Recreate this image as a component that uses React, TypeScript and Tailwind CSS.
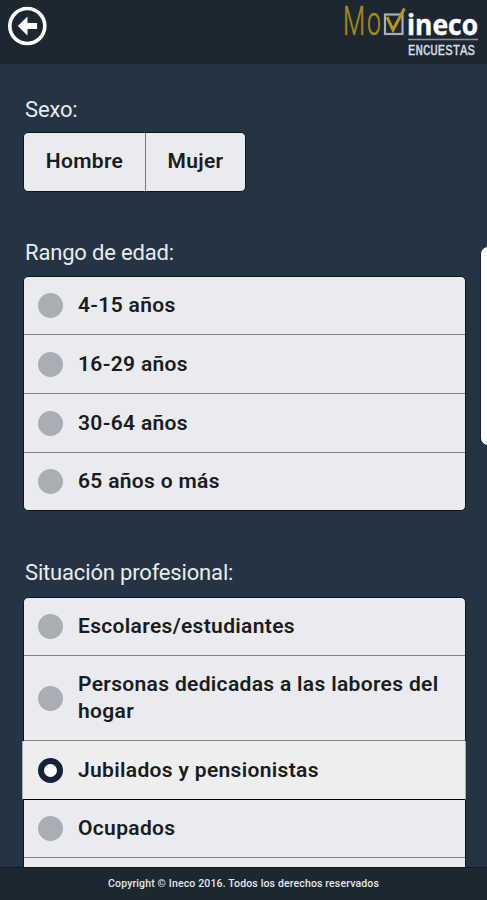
import React, { useState } from "react";
import clsx from "clsx";

type Option = { label: string; size: string };

const GENDERS: Option[] = [
  { label: "Hombre", size: "w-[122px]" },
  { label: "Mujer", size: "w-[99px]" },
];

const AGES: Option[] = [
  { label: "4-15 años", size: "h-[58px]" },
  { label: "16-29 años", size: "h-[59px]" },
  { label: "30-64 años", size: "h-[59px]" },
  { label: "65 años o más", size: "h-[57px]" },
];

const JOBS: Option[] = [
  { label: "Escolares/estudiantes", size: "h-[58px]" },
  { label: "Personas dedicadas a las labores del hogar", size: "h-[85px]" },
  { label: "Jubilados y pensionistas", size: "h-[59px]" },
  { label: "Ocupados", size: "h-[58px]" },
];

function Logo() {
  return (
    <svg width="144" height="60" viewBox="0 0 144 60" fill="none">
      <text
        transform="translate(0 35) scale(0.64 1)"
        fontFamily="Roboto, sans-serif"
        fontWeight="300"
        fontSize="40"
        stroke="#a68a1c"
        strokeWidth="0.5"
        fill="#a68a1c"
      >
        M
      </text>
      <text
        transform="translate(24 35) scale(0.62 1)"
        fontFamily="Roboto, sans-serif"
        fontWeight="300"
        fontSize="40"
        stroke="#a68a1c"
        strokeWidth="0.5"
        fill="#a68a1c"
      >
        o
      </text>
      <rect x="42" y="14.5" width="17.5" height="19.5" stroke="#a9afbb" strokeWidth="2.2" />
      <path d="M44 17 50 30 61.5 8.5" stroke="#b5961a" strokeWidth="3" />
      <text
        x="64"
        y="34.5"
        fontFamily="'Open Sans', sans-serif"
        fontWeight="700"
        fontSize="28.5"
        textLength="71"
        lengthAdjust="spacingAndGlyphs"
        stroke="#fff"
        strokeWidth="0.4"
        fill="#fff"
      >
        ineco
      </text>
      <path d="M65 39.5h70" stroke="#8b929b" strokeWidth="1.5" />
      <text
        x="65"
        y="54.5"
        fontFamily="'Liberation Mono', monospace"
        fontWeight="400"
        fontSize="15"
        textLength="67"
        lengthAdjust="spacingAndGlyphs"
        stroke="#d9dde2"
        strokeWidth="0.4"
        fill="#d9dde2"
      >
        ENCUESTAS
      </text>
    </svg>
  );
}

function BackIcon() {
  return (
    <svg width="40" height="40" viewBox="0 0 40 40">
      <circle cx="20.3" cy="20" r="17.5" fill="none" stroke="#fff" strokeWidth="3.6" />
      <path d="M10.8 20 20.5 10.6V17h9.6v6h-9.6v6.4z" fill="#fff" />
    </svg>
  );
}

function Title({ children }: { children: React.ReactNode }) {
  return (
    <h2 className="ml-[2px] text-[22px] leading-[28px] font-normal tracking-[-0.17px] text-[#e8ebee]">
      {children}
    </h2>
  );
}

interface RadioListProps {
  options: Option[];
  value: string | null;
  onChange: (label: string) => void;
  more?: boolean;
}

function RadioList({ options, value, onChange, more }: RadioListProps) {
  return (
    <div className="rounded-[5px] border border-[#0b1420] bg-[#e9ebee]">
      {options.map((option, i) => {
        const checked = option.label === value;
        const last = !more && i === options.length - 1;
        return (
          <button
            key={option.label}
            onClick={() => onChange(option.label)}
            className={clsx(
              "flex items-center text-left",
              option.size,
              checked
                ? "-mx-[2px] w-[444px] border-x border-b border-x-[#a9a9bd] border-b-black bg-[#eeeeee] pl-[15px]"
                : "w-full pl-[14px]",
              !checked && !last && "border-b border-[#7f8388]",
            )}
          >
            <span
              className={clsx(
                "h-[25px] w-[25px] flex-none rounded-full",
                checked ? "border-[6.5px] border-[#14223a] bg-white" : "bg-[#a9aeb4]",
              )}
            />
            <span className="ml-[15px] pr-[16px] text-[21px] leading-[27px] font-semibold tracking-[0.33px] text-[#191c20]">
              {option.label}
            </span>
          </button>
        );
      })}
      {more && <div className="h-[40px]" />}
    </div>
  );
}

export default function App() {
  const [gender, setGender] = useState<string | null>(null);
  const [age, setAge] = useState<string | null>(null);
  const [job, setJob] = useState<string | null>("Jubilados y pensionistas");

  return (
    <div className="relative flex h-[900px] w-[487px] flex-col overflow-hidden bg-[#253443] font-['Roboto','Liberation_Sans',sans-serif]">
      <header className="flex h-[64px] flex-none items-start justify-between bg-[#1c2732] pt-[6px] pl-[7px]">
        <button aria-label="Volver">
          <BackIcon />
        </button>
        <div className="-mt-[6px]">
          <Logo />
        </div>
      </header>

      <main className="min-h-0 flex-1 overflow-hidden pt-[32px] pr-[21px] pl-[23px]">
        <Title>Sexo:</Title>
        <div className="mt-[8px] flex h-[60px] w-[223px] overflow-hidden rounded-[5px] border border-[#0b1420] bg-[#e9ebee]">
          {GENDERS.map((option, i) => (
            <button
              key={option.label}
              onClick={() => setGender(option.label)}
              className={clsx(
                "pb-px text-[21px] font-semibold tracking-[0.33px] text-[#191c20]",
                option.size,
                i === 0 && "border-r border-[#74787d]",
                gender === option.label && "bg-[#d5d9de]",
              )}
            >
              {option.label}
            </button>
          ))}
        </div>

        <div className="mt-[47px]">
          <Title>Rango de edad:</Title>
        </div>
        <div className="mt-[9px]">
          <RadioList options={AGES} value={age} onChange={setAge} />
        </div>

        <div className="mt-[48px]">
          <Title>Situación profesional:</Title>
        </div>
        <div className="mt-[10px]">
          <RadioList options={JOBS} value={job} onChange={setJob} more />
        </div>
      </main>

      <footer className="flex h-[33px] flex-none items-center justify-center border-t border-[#101923] bg-[#1c2732] pb-px text-[10.5px] font-medium tracking-[0.15px] text-[#e4e7ea]">
        Copyright © Ineco 2016. Todos los derechos reservados
      </footer>

      {/* Edge panel handle */}
      <div className="absolute top-[246px] left-[480px] h-[200px] w-[20px] rounded-[8px] border border-[#18233a] bg-white" />
    </div>
  );
}
